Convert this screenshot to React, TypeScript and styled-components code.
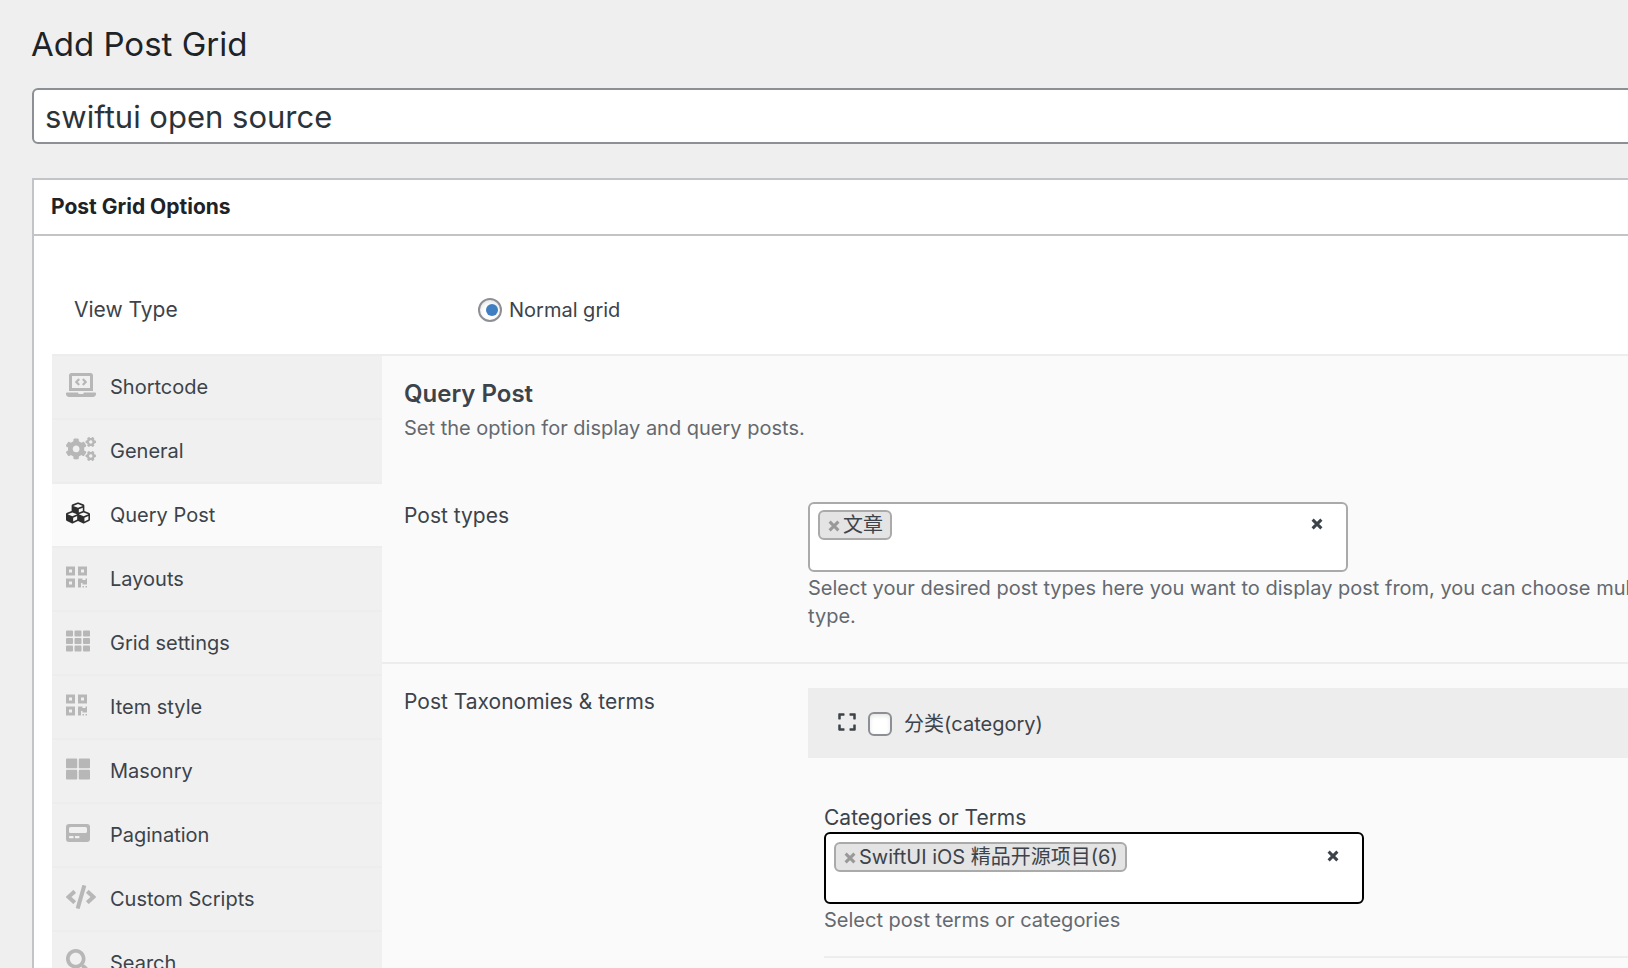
import React, { useState } from "react";
import styled, { createGlobalStyle } from "styled-components";
import {
  FaCode,
  FaCogs,
  FaCubes,
  FaExpand,
  FaLaptopCode,
  FaPager,
  FaQrcode,
  FaSearch,
  FaTh,
  FaThLarge,
} from "react-icons/fa";
import type { IconType } from "react-icons";

const GlobalStyle = createGlobalStyle`
  *, *::before, *::after { box-sizing: border-box; }
  html { overflow-x: hidden; }
  body {
    margin: 0;
    background: #efefef;
    color: #3c434a;
    font: 400 20px/28px Inter, "Noto Sans CJK SC", sans-serif;
  }
  button, input { font: inherit; color: inherit; }
`;

/* The editor is wider than the viewport and runs off its right edge. */
const Page = styled.main`
  width: calc(100% + 140px);
  padding: 22px 0 0 31px;
`;

const PageTitle = styled.h1`
  margin: 0 0 22px;
  color: #1d2327;
  font-size: 33px;
  font-weight: 400;
  line-height: 44px;
`;

const TitleInput = styled.input`
  display: block;
  width: 100%;
  height: 56px;
  padding: 0 11px;
  border: 2px solid #8c8f94;
  border-radius: 6px;
  outline: none;
  background: #fff;
  color: #2c3338;
  font-size: 31px;
`;

const Editor = styled.div`
  padding-left: 1px;
`;

const Card = styled.section`
  margin-top: 34px;
  border: 2px solid #c3c4c7;
  background: #fff;
`;

const CardTitle = styled.h2`
  margin: 0;
  padding: 13px 17px;
  border-bottom: 2px solid #c3c4c7;
  color: #1d2327;
  font-size: 21px;
  font-weight: 700;
  line-height: 28px;
`;

const CardBody = styled.div`
  padding: 0 18px;
`;

const ViewRow = styled.div`
  display: grid;
  grid-template-columns: 404px 1fr;
  align-items: center;
  padding: 60px 0 30px 22px;
`;

const FieldName = styled.span`
  font-size: 21px;
`;

const FieldLabel = styled.label`
  display: block;
  font-size: 21px;
`;

const RadioLabel = styled.label`
  display: flex;
  align-items: center;
  gap: 7px;
`;

const Radio = styled.input`
  appearance: none;
  width: 24px;
  height: 24px;
  margin: 0;
  border: 2px solid #8c8f94;
  border-radius: 50%;
  background: #fff;
  box-shadow: inset 0 2px 4px rgba(0, 0, 0, 0.1);

  &:checked::before {
    content: "";
    display: block;
    width: 12px;
    height: 12px;
    margin: 4px 0 0 6px;
    border-radius: 50%;
    background: #3f7fc1;
  }
`;

const Checkbox = styled.input`
  appearance: none;
  width: 24px;
  height: 24px;
  margin: 0 12px 0 11px;
  border: 2px solid #8c8f94;
  border-radius: 6px;
  background: #fff;
  box-shadow: inset 0 2px 4px rgba(0, 0, 0, 0.1);

  &:checked {
    background: #3f7fc1;
  }
`;

const Panels = styled.div`
  display: grid;
  grid-template-columns: 330px 1fr;
  border-top: 2px solid #ededed;
`;

const TabList = styled.nav`
  display: flex;
  flex-direction: column;
  background: #f0f0f0;
`;

const Tab = styled.button<{ $active: boolean }>`
  display: flex;
  align-items: center;
  height: 64px;
  padding: 0 14px;
  border: 0;
  border-bottom: 2px solid #ededed;
  background: ${(p) => (p.$active ? "#fafafa" : "#f0f0f0")};
  text-align: left;
  cursor: pointer;

  svg {
    color: ${(p) => (p.$active ? "#2e2e2e" : "#b7b7b7")};
  }
`;

const TabIcon = styled.span<{ $width: number }>`
  display: flex;
  width: 44px;
  padding-bottom: 4px;

  svg {
    width: ${(p) => p.$width}px;
    height: 24px;
  }
`;

const Content = styled.div`
  background: #fafafa;
`;

const SectionHead = styled.header`
  padding: 24px 22px 36px;
`;

const SectionTitle = styled.h3`
  margin: 0 0 6px;
  font-size: 24px;
  font-weight: 600;
  line-height: 28px;
`;

const Hint = styled.p`
  margin: 0;
  color: #646970;
`;

const FieldHint = styled(Hint)`
  margin-top: 2px;
`;

const FieldRow = styled.div`
  display: grid;
  grid-template-columns: 404px 1fr;
  padding: 24px 0 32px 22px;
  border-bottom: 2px solid #ededed;
`;

const SelectBox = styled.div<{ $focused?: boolean }>`
  display: flex;
  align-items: flex-start;
  width: 540px;
  height: ${(p) => (p.$focused ? 72 : 70)}px;
  padding: ${(p) => (p.$focused ? 8 : 6)}px 23px 0 8px;
  border: 2px solid ${(p) => (p.$focused ? "#000" : "#aaa")};
  border-radius: 6px;
  background: #fff;
`;

const Chip = styled.span`
  display: flex;
  align-items: center;
  gap: 3px;
  height: 30px;
  padding: 0 7px 0 8px;
  border: 2px solid #aaa;
  border-radius: 6px;
  background: #e4e4e4;
  white-space: nowrap;
`;

const CrossButton = styled.button<{ $muted?: boolean }>`
  display: flex;
  padding: ${(p) => (p.$muted ? "2px 0 0" : "8px 0 0")};
  border: 0;
  background: none;
  color: ${(p) => (p.$muted ? "#999" : "#3c434a")};
  cursor: pointer;
`;

const SearchField = styled.input`
  flex: 1;
  min-width: 0;
  height: 30px;
  padding: 0 8px;
  border: 0;
  outline: none;
  background: transparent;
`;

const TaxonomyBar = styled.div`
  display: flex;
  align-items: center;
  height: 70px;
  padding: 2px 29px 0;
  background: #ededed;
`;

const IconButton = styled.button`
  display: flex;
  padding: 0 0 4px;
  border: 0;
  background: none;
  cursor: pointer;
`;

const TermsBlock = styled.div`
  margin: 46px 0 0 16px;
  padding-bottom: 22px;
  border-bottom: 2px solid #ededed;
`;

const Cross = () => (
  <svg width="12" height="12" viewBox="0 0 12 12" aria-hidden="true">
    <path d="M1.6 1.6l8.8 8.8M10.4 1.6l-8.8 8.8" stroke="currentColor" strokeWidth="3" fill="none" />
  </svg>
);

const tabs: { name: string; icon: IconType; width: number }[] = [
  { name: "Shortcode", icon: FaLaptopCode, width: 30 },
  { name: "General", icon: FaCogs, width: 30 },
  { name: "Query Post", icon: FaCubes, width: 24 },
  { name: "Layouts", icon: FaQrcode, width: 21 },
  { name: "Grid settings", icon: FaTh, width: 24 },
  { name: "Item style", icon: FaQrcode, width: 21 },
  { name: "Masonry", icon: FaThLarge, width: 24 },
  { name: "Pagination", icon: FaPager, width: 24 },
  { name: "Custom Scripts", icon: FaCode, width: 30 },
  { name: "Search", icon: FaSearch, width: 24 },
];

interface MultiSelectProps {
  id: string;
  initial: string[];
  focused?: boolean;
}

function MultiSelect({ id, initial, focused }: MultiSelectProps) {
  const [items, setItems] = useState(initial);
  return (
    <SelectBox $focused={focused}>
      {items.map((item) => (
        <Chip key={item}>
          <CrossButton
            $muted
            type="button"
            aria-label={`Remove ${item}`}
            onClick={() => setItems(items.filter((i) => i !== item))}
          >
            <Cross />
          </CrossButton>
          {item}
        </Chip>
      ))}
      <SearchField id={id} type="text" autoComplete="off" />
      <CrossButton type="button" aria-label="Remove all items" onClick={() => setItems([])}>
        <Cross />
      </CrossButton>
    </SelectBox>
  );
}

export default function App() {
  const [active, setActive] = useState("Query Post");
  const [title, setTitle] = useState("swiftui open source");

  return (
    <>
      <GlobalStyle />
      <Page>
        <PageTitle>Add Post Grid</PageTitle>
        <Editor>
          <TitleInput
            type="text"
            aria-label="Title"
            value={title}
            onChange={(e) => setTitle(e.target.value)}
          />
          <Card>
            <CardTitle>Post Grid Options</CardTitle>
            <CardBody>
              <ViewRow>
                <FieldName>View Type</FieldName>
                <RadioLabel>
                  <Radio type="radio" name="view-type" defaultChecked />
                  Normal grid
                </RadioLabel>
              </ViewRow>
              <Panels>
                <TabList>
                  {tabs.map(({ name, icon: Icon, width }) => (
                    <Tab
                      key={name}
                      type="button"
                      $active={name === active}
                      onClick={() => setActive(name)}
                    >
                      <TabIcon $width={width}>
                        <Icon />
                      </TabIcon>
                      {name}
                    </Tab>
                  ))}
                </TabList>
                <Content>
                  <SectionHead>
                    <SectionTitle>Query Post</SectionTitle>
                    <Hint>Set the option for display and query posts.</Hint>
                  </SectionHead>
                  <FieldRow>
                    <FieldLabel htmlFor="post-types">Post types</FieldLabel>
                    <div>
                      <MultiSelect id="post-types" initial={["文章"]} />
                      <FieldHint>
                        Select your desired post types here you want to display post from, you can
                        choose multiple post type.
                      </FieldHint>
                    </div>
                  </FieldRow>
                  <FieldRow>
                    <FieldName>Post Taxonomies &amp; terms</FieldName>
                    <div>
                      <TaxonomyBar>
                        <IconButton type="button" aria-label="Expand">
                          <FaExpand size={20} />
                        </IconButton>
                        <Checkbox type="checkbox" id="tax-category" />
                        <label htmlFor="tax-category">分类(category)</label>
                      </TaxonomyBar>
                      <TermsBlock>
                        <FieldLabel htmlFor="terms">Categories or Terms</FieldLabel>
                        <MultiSelect
                          id="terms"
                          initial={["SwiftUI iOS 精品开源项目(6)"]}
                          focused
                        />
                        <FieldHint>Select post terms or categories</FieldHint>
                      </TermsBlock>
                    </div>
                  </FieldRow>
                </Content>
              </Panels>
            </CardBody>
          </Card>
        </Editor>
      </Page>
    </>
  );
}
